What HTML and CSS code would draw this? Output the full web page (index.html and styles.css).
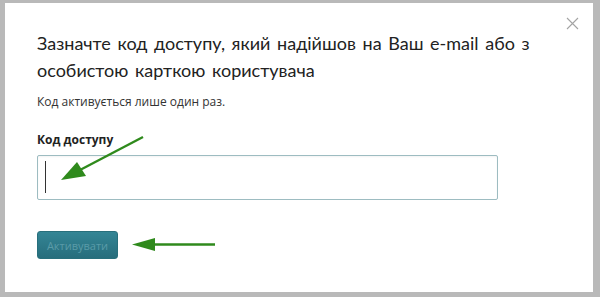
FILE: index.html
```html
<!DOCTYPE html>
<html lang="uk">
<head>
<meta charset="utf-8">
<title>Код доступу</title>
<link rel="stylesheet" href="styles.css">
</head>
<body>
<div class="modal">
  <button class="close" aria-label="Закрити">
    <svg width="13" height="13" viewBox="0 0 13 13"><path d="M1 1L12 12M12 1L1 12" stroke="#a4a4a4" stroke-width="1.1" fill="none"/></svg>
  </button>
  <h1 class="title">Зазначте код доступу, який надійшов на Ваш e-mail або з особистою карткою користувача</h1>
  <p class="note">Код активується лише один раз.</p>
  <label class="label">Код доступу</label>
  <div class="field"><span class="caret"></span></div>
  <button class="btn">Активувати</button>
  <svg class="arrows" width="600" height="297" viewBox="0 0 600 297">
    <g fill="#2f8a1c" stroke="#2f8a1c">
      <line x1="143" y1="137" x2="80" y2="170" stroke-width="2.4"/>
      <polygon points="61,180 77,162 86,176" stroke="none"/>
      <line x1="215" y1="244.5" x2="152" y2="244.5" stroke-width="2.4"/>
      <polygon points="132,244.5 155,238 155,251" stroke="none"/>
    </g>
  </svg>
</div>
</body>
</html>
```
FILE: styles.css
```css
html, body {
  margin: 0;
  padding: 0;
}
body {
  width: 600px;
  height: 297px;
  background: #b9b9b9;
  font-family: "Open Sans", "Liberation Sans", sans-serif;
  overflow: hidden;
  padding: 3px 7px 0 5px;
  box-sizing: border-box;
}
.modal {
  width: 588px;
  height: 289px;
  background: #fff;
  box-sizing: border-box;
  padding: 27px 32px 0 32px;
  position: relative;
  display: flex;
  flex-direction: column;
  align-items: flex-start;
}
.close {
  position: absolute;
  top: 14px;
  right: 14px;
  border: 0;
  background: none;
  padding: 0;
  width: 13px;
  height: 13px;
}
.close svg { display: block; }
.title {
  margin: 0;
  font-family: Lato, "Open Sans", sans-serif;
  font-weight: 400;
  font-size: 18px;
  line-height: 27px;
  color: #222;
  width: 524px;
  word-spacing: 2px;
}
.note {
  margin: 10px 0 0;
  font-size: 12px;
  line-height: 16px;
  color: #333;
}
.label {
  margin-top: 22px;
  font-size: 12px;
  font-weight: 700;
  line-height: 16px;
  color: #222;
}
.field {
  margin-top: 7px;
  width: 461px;
  height: 45px;
  border: 1px solid #9dbcc1;
  border-radius: 2px;
  box-sizing: border-box;
  padding: 5px 7px;
  box-shadow: inset 0 1px 2px rgba(0,0,0,0.05);
}
.caret {
  display: block;
  width: 1px;
  height: 32px;
  background: #333;
}
.btn {
  margin-top: 31px;
  width: 81px;
  height: 28px;
  border: 1px solid #286f7c;
  border-radius: 3px;
  background: linear-gradient(#348595, #276d7c);
  color: #5a9ba8;
  font-family: "Open Sans", "Liberation Sans", sans-serif;
  font-size: 11px;
  padding: 0;
}
.arrows {
  position: absolute;
  left: -5px;
  top: -3px;
  pointer-events: none;
}
```
